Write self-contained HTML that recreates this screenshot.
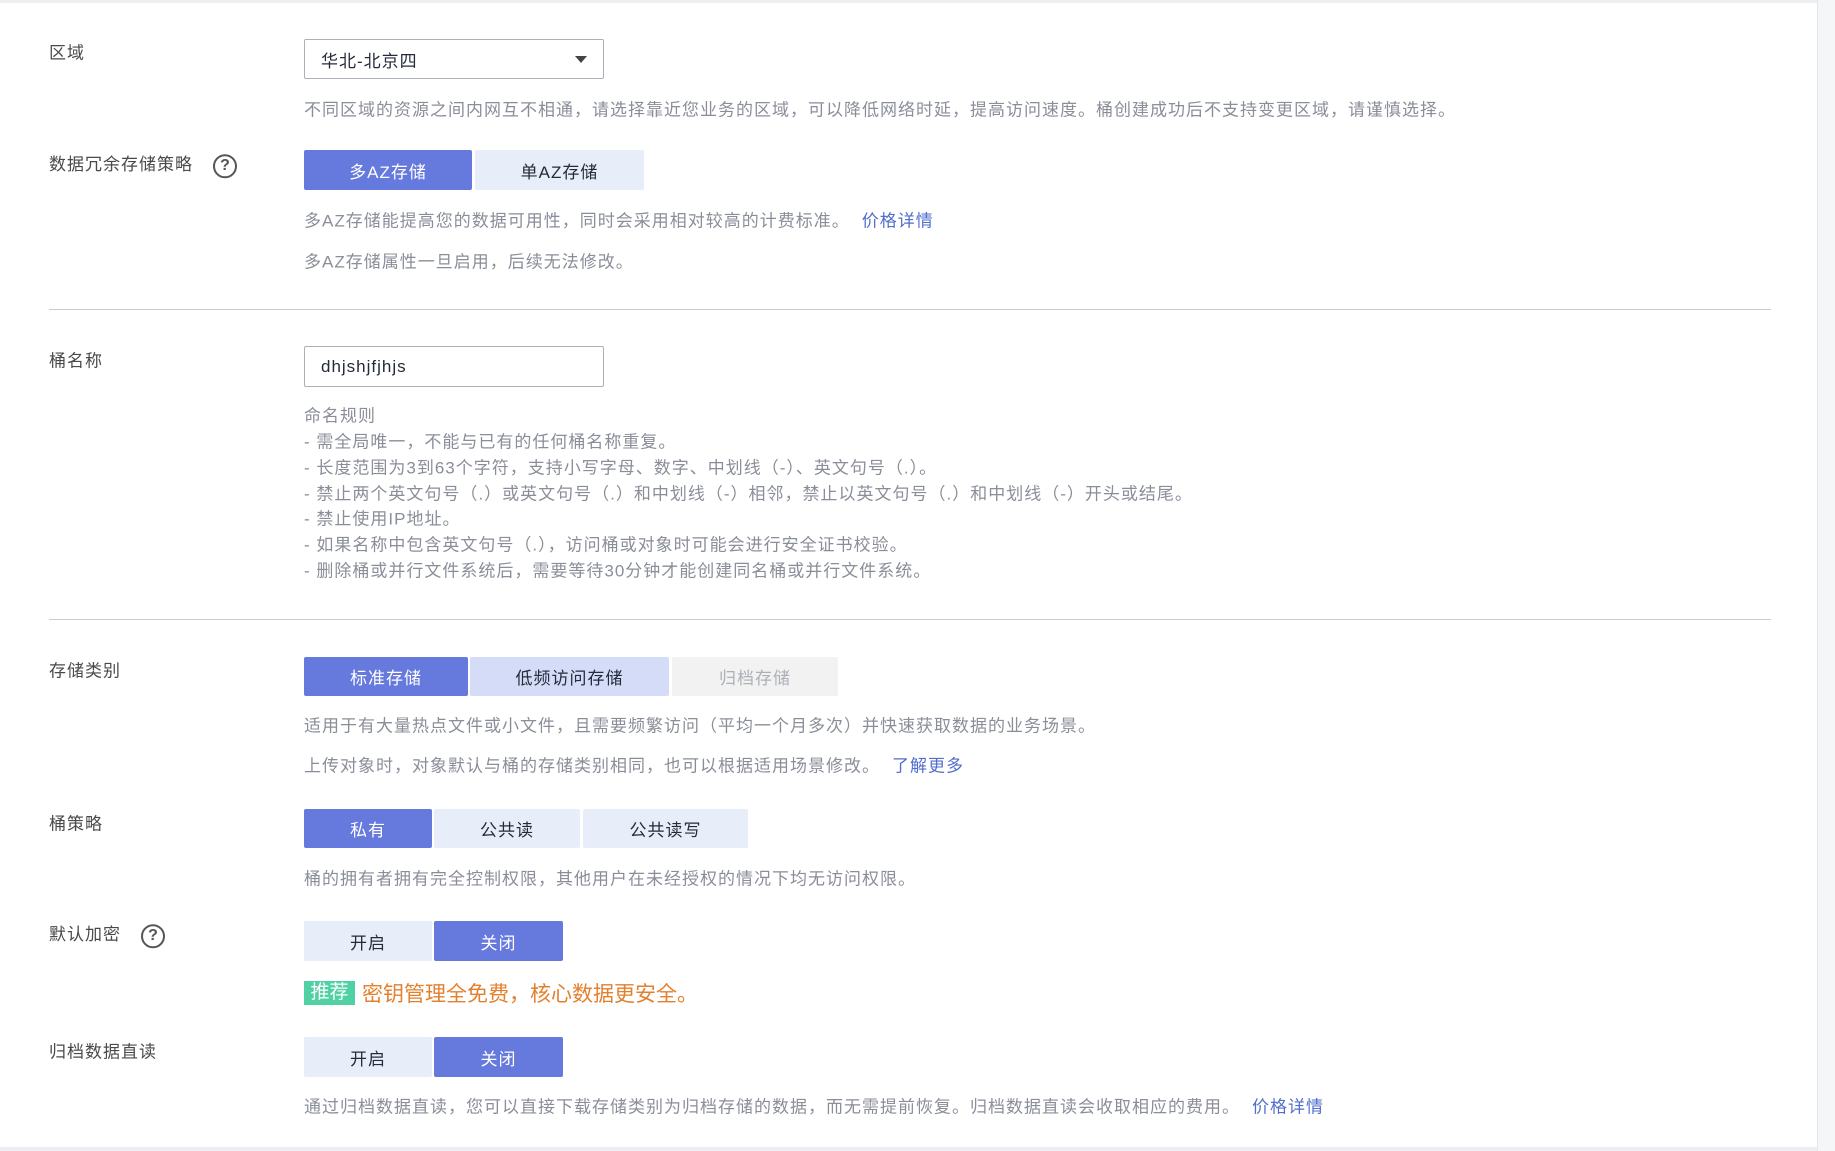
<!DOCTYPE html>
<html><head><meta charset="utf-8"><style>
*{margin:0;padding:0;box-sizing:border-box}
body{width:1835px;height:1151px;background:#fff;font-family:"Liberation Sans","Noto Sans CJK SC",sans-serif;font-size:17px;color:#333;position:relative;overflow:hidden;letter-spacing:1px}
.a{position:absolute;white-space:nowrap}
.lbl{left:49px;color:#4a4a4a;transform:translateY(-50%)}
.help{left:304px;color:#8a8e99;transform:translateY(-50%)}
.btn{position:absolute;display:flex;align-items:center;justify-content:center;background:#e8edfa;color:#252b3a;border-radius:2px}
.on{background:#6679dc;color:#fff}
.dis{background:#f2f2f2;color:#adb0b8}
.hr{position:absolute;left:49px;width:1722px;height:1px;background:#ccc}
.box{position:absolute;border:1px solid #adb0b8;border-radius:2px;background:#fff;display:flex;align-items:center;padding-left:16px;color:#252b3a}
.q{display:inline-block;width:24px;height:24px;border:2px solid #555;border-radius:50%;text-align:center;line-height:20px;font-size:16px;color:#555;font-weight:bold;vertical-align:middle;margin-left:20px;letter-spacing:0}
a{color:#526ecc;text-decoration:none;margin-left:12px}
</style></head><body>
<div class="a" style="left:0;top:0;width:1835px;height:3px;background:#eceef2"></div>
<div class="a" style="left:0;top:1147px;width:1835px;height:4px;background:#eceef2"></div>
<div class="a" style="left:1817px;top:0;width:18px;height:1151px;background:#f5f6f8;border-left:1px solid #e4e6ea"></div>

<div class="a lbl" style="top:51px">区域</div>
<div class="box" style="left:304px;top:39px;width:300px;height:40px">华北-北京四<span style="position:absolute;right:16px;top:16px;border-left:6px solid transparent;border-right:6px solid transparent;border-top:7px solid #444"></span></div>
<div class="a help" style="top:108px">不同区域的资源之间内网互不相通，请选择靠近您业务的区域，可以降低网络时延，提高访问速度。桶创建成功后不支持变更区域，请谨慎选择。</div>

<div class="a lbl" style="top:164px">数据冗余存储策略<span class="q">?</span></div>
<div class="btn on" style="left:304px;top:150px;width:168px;height:40px">多AZ存储</div>
<div class="btn" style="left:475px;top:150px;width:169px;height:40px">单AZ存储</div>
<div class="a help" style="top:219px">多AZ存储能提高您的数据可用性，同时会采用相对较高的计费标准。<a>价格详情</a></div>
<div class="a help" style="top:260px">多AZ存储属性一旦启用，后续无法修改。</div>
<div class="hr" style="top:309px"></div>

<div class="a lbl" style="top:359px">桶名称</div>
<div class="box" style="left:304px;top:346px;width:300px;height:41px">dhjshjfjhjs</div>
<div class="a help" style="top:414px">命名规则</div>
<div class="a help" style="top:440px">- 需全局唯一，不能与已有的任何桶名称重复。</div>
<div class="a help" style="top:466px">- 长度范围为3到63个字符，支持小写字母、数字、中划线（-）、英文句号（.）。</div>
<div class="a help" style="top:492px">- 禁止两个英文句号（.）或英文句号（.）和中划线（-）相邻，禁止以英文句号（.）和中划线（-）开头或结尾。</div>
<div class="a help" style="top:517px">- 禁止使用IP地址。</div>
<div class="a help" style="top:543px">- 如果名称中包含英文句号（.），访问桶或对象时可能会进行安全证书校验。</div>
<div class="a help" style="top:569px">- 删除桶或并行文件系统后，需要等待30分钟才能创建同名桶或并行文件系统。</div>
<div class="hr" style="top:619px"></div>

<div class="a lbl" style="top:669px">存储类别</div>
<div class="btn on" style="left:304px;top:657px;width:164px;height:39px">标准存储</div>
<div class="btn" style="left:470px;top:657px;width:199px;height:39px;background:#d4dcf7">低频访问存储</div>
<div class="btn dis" style="left:672px;top:657px;width:166px;height:39px">归档存储</div>
<div class="a help" style="top:724px">适用于有大量热点文件或小文件，且需要频繁访问（平均一个月多次）并快速获取数据的业务场景。</div>
<div class="a help" style="top:764px">上传对象时，对象默认与桶的存储类别相同，也可以根据适用场景修改。<a>了解更多</a></div>

<div class="a lbl" style="top:822px">桶策略</div>
<div class="btn on" style="left:304px;top:809px;width:128px;height:39px">私有</div>
<div class="btn" style="left:434px;top:809px;width:146px;height:39px">公共读</div>
<div class="btn" style="left:583px;top:809px;width:165px;height:39px">公共读写</div>
<div class="a help" style="top:877px">桶的拥有者拥有完全控制权限，其他用户在未经授权的情况下均无访问权限。</div>

<div class="a lbl" style="top:934px">默认加密<span class="q">?</span></div>
<div class="btn" style="left:304px;top:921px;width:128px;height:40px">开启</div>
<div class="btn on" style="left:434px;top:921px;width:129px;height:40px">关闭</div>
<div class="a" style="left:304px;top:981px;width:51px;height:24px;background:#50d1a4;color:#fff;font-size:19px;line-height:24px;text-align:center;letter-spacing:0">推荐</div>
<div class="a" style="left:362px;top:978px;color:#e3802e;font-size:21px;letter-spacing:0">密钥管理全免费，核心数据更安全。</div>

<div class="a lbl" style="top:1050px">归档数据直读</div>
<div class="btn" style="left:304px;top:1037px;width:128px;height:40px">开启</div>
<div class="btn on" style="left:434px;top:1037px;width:129px;height:40px">关闭</div>
<div class="a help" style="top:1105px">通过归档数据直读，您可以直接下载存储类别为归档存储的数据，而无需提前恢复。归档数据直读会收取相应的费用。<a>价格详情</a></div>
</body></html>
